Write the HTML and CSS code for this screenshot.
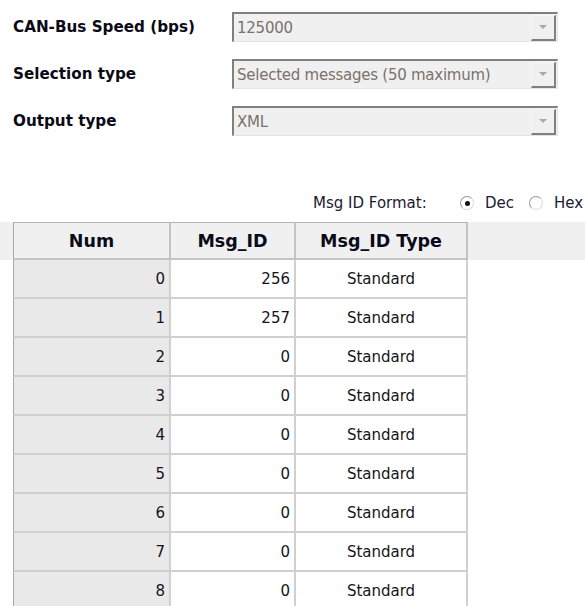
FILE: index.html
```html
<!DOCTYPE html>
<html>
<head>
<meta charset="utf-8">
<link rel="stylesheet" href="styles.css">
</head>
<body>
<div class="settings">
  <div class="field">
    <span class="label">CAN-Bus Speed (bps)</span>
    <div class="combo"><span class="value">125000</span><span class="drop"><i class="arrow"></i></span></div>
  </div>
  <div class="field">
    <span class="label">Selection type</span>
    <div class="combo"><span class="value">Selected messages (50 maximum)</span><span class="drop"><i class="arrow"></i></span></div>
  </div>
  <div class="field">
    <span class="label">Output type</span>
    <div class="combo"><span class="value">XML</span><span class="drop"><i class="arrow"></i></span></div>
  </div>
</div>

<div class="format">
  <span class="format-label">Msg ID Format:</span>
  <label class="radio"><span class="dot checked"></span>Dec</label>
  <label class="radio"><span class="dot"></span>Hex</label>
</div>

<div class="grid">
  <div class="head">
    <div class="hcell">Num</div>
    <div class="hcell">Msg_ID</div>
    <div class="hcell">Msg_ID Type</div>
  </div>
  <div class="row"><div class="num">0</div><div class="id">256</div><div class="type">Standard</div></div>
  <div class="row"><div class="num">1</div><div class="id">257</div><div class="type">Standard</div></div>
  <div class="row"><div class="num">2</div><div class="id">0</div><div class="type">Standard</div></div>
  <div class="row"><div class="num">3</div><div class="id">0</div><div class="type">Standard</div></div>
  <div class="row"><div class="num">4</div><div class="id">0</div><div class="type">Standard</div></div>
  <div class="row"><div class="num">5</div><div class="id">0</div><div class="type">Standard</div></div>
  <div class="row"><div class="num">6</div><div class="id">0</div><div class="type">Standard</div></div>
  <div class="row"><div class="num">7</div><div class="id">0</div><div class="type">Standard</div></div>
  <div class="row"><div class="num">8</div><div class="id">0</div><div class="type">Standard</div></div>
</div>
</body>
</html>
```

FILE: styles.css
```css
html, body {
  margin: 0;
  padding: 0;
  background: #ffffff;
  overflow: hidden;
}

body {
  width: 585px;
  height: 606px;
  font-family: "DejaVu Sans", Verdana, sans-serif;
  font-size: 15px;
  color: #101020;
}

/* settings form */
.settings {
  display: flex;
  flex-direction: column;
  gap: 17px;
  padding: 12px 0 0 13px;
}

.field {
  display: flex;
  align-items: center;
  height: 30px;
}

.label {
  width: 219px;
  font-weight: bold;
  font-size: 15.2px;
  color: #0a0a14;
}

.combo {
  box-sizing: border-box;
  width: 326px;
  height: 30px;
  display: flex;
  align-items: center;
  background: #f0f0f0;
  border-top: 2px solid #808080;
  border-left: 2px solid #808080;
  border-right: 1px solid #e4e4e4;
  border-bottom: 1px solid #e4e4e4;
}

.value {
  flex: 1;
  padding-left: 3px;
  font-size: 15px;
  letter-spacing: -0.25px;
  color: #7a726c;
  white-space: nowrap;
}

.drop {
  box-sizing: border-box;
  width: 25px;
  height: 26px;
  margin-right: 1px;
  display: flex;
  align-items: center;
  justify-content: center;
  border-top: 1px solid #f6f6f6;
  border-left: 1px solid #f6f6f6;
  border-right: 2px solid #808080;
  border-bottom: 2px solid #808080;
  background: #f0f0f0;
}

.arrow {
  width: 0;
  height: 0;
  border-left: 4px solid transparent;
  border-right: 4px solid transparent;
  border-top: 4px solid #a8a8a8;
}

/* id format selector */
.format {
  display: flex;
  align-items: center;
  height: 18px;
  margin-top: 58px;
  padding-left: 313px;
  font-size: 15px;
  color: #1a1a30;
  white-space: nowrap;
}

.format > * {
  flex: none;
}

.format-label {
  width: 147px;
}

.radio {
  display: flex;
  align-items: center;
  gap: 11px;
  margin-right: 15px;
}

.dot {
  box-sizing: border-box;
  width: 14px;
  height: 14px;
  border-radius: 50%;
  border: 1px solid #9a9a9a;
  border-right-color: #dcdcdc;
  border-bottom-color: #dcdcdc;
  background: #ffffff;
  position: relative;
}

.dot.checked::after {
  content: "";
  position: absolute;
  left: 3.5px;
  top: 3.5px;
  width: 5px;
  height: 5px;
  border-radius: 50%;
  background: #101010;
}

/* message table */
.grid {
  margin-top: 10px;
}

.head {
  display: flex;
  height: 38px;
  background: #f0f0f0;
}

.hcell {
  box-sizing: border-box;
  display: flex;
  align-items: center;
  justify-content: center;
  font-weight: bold;
  font-size: 17.5px;
  border-top: 1px solid #b4b4b4;
  border-bottom: 2px solid #c4c4c4;
  border-right: 2px solid #c4c4c4;
  color: #0a0a1a;
}

.hcell:first-child {
  margin-left: 13px;
  border-left: 1px solid #a8a8a8;
  width: 158px;
}

.hcell:nth-child(2) { width: 125px; }
.hcell:nth-child(3) { width: 172px; }

.row {
  display: flex;
  height: 39px;
  padding-left: 13px;
}

.row > div {
  box-sizing: border-box;
  display: flex;
  align-items: center;
  border-bottom: 2px solid #d0d0d0;
  border-right: 2px solid #d0d0d0;
  font-size: 15px;
  color: #141420;
}

.num {
  width: 158px;
  justify-content: flex-end;
  padding-right: 4px;
  background: #e9e9e9;
  border-left: 1px solid #a8a8a8;
}

.id {
  width: 125px;
  justify-content: flex-end;
  padding-right: 4px;
}

.type {
  width: 172px;
  justify-content: center;
}
```
